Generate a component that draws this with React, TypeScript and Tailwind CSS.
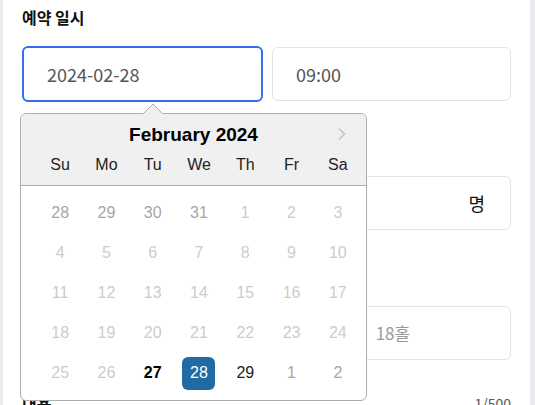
import { ChevronRight } from 'lucide-react';

const weekdays = ['Su', 'Mo', 'Tu', 'We', 'Th', 'Fr', 'Sa'];

type Day = { n: number; kind: 'outside' | 'disabled' | 'today' | 'selected' | 'normal' };

const weeks: Day[][] = [
  [
    { n: 28, kind: 'outside' },
    { n: 29, kind: 'outside' },
    { n: 30, kind: 'outside' },
    { n: 31, kind: 'outside' },
    { n: 1, kind: 'disabled' },
    { n: 2, kind: 'disabled' },
    { n: 3, kind: 'disabled' },
  ],
  [4, 5, 6, 7, 8, 9, 10].map((n) => ({ n, kind: 'disabled' as const })),
  [11, 12, 13, 14, 15, 16, 17].map((n) => ({ n, kind: 'disabled' as const })),
  [18, 19, 20, 21, 22, 23, 24].map((n) => ({ n, kind: 'disabled' as const })),
  [
    { n: 25, kind: 'disabled' },
    { n: 26, kind: 'disabled' },
    { n: 27, kind: 'today' },
    { n: 28, kind: 'selected' },
    { n: 29, kind: 'normal' },
    { n: 1, kind: 'outside' },
    { n: 2, kind: 'outside' },
  ],
];

const dayText = {
  outside: 'text-[#a6a6a6]',
  disabled: 'text-[#cccccc]',
  today: 'text-[#000] font-bold',
  selected: 'text-white bg-[#216ba5] rounded-[6px]',
  normal: 'text-[#222] font-medium',
};

function DatePopup() {
  return (
    <div className="absolute left-[17px] top-[113px] w-[347px] h-[288px] rounded-[6px] border border-[#aeaeae] bg-white font-['Liberation_Sans',sans-serif]">
      {/* arrow */}
      <svg className="absolute left-[121px] top-[-11px]" width="22" height="12" viewBox="0 0 22 12">
        <path d="M0 11.5 L11 1 L22 11.5 Z" fill="#f0f0f0" />
        <path d="M0.5 11.5 L11 1 L21.5 11.5" fill="none" stroke="#aeaeae" strokeWidth="1" />
      </svg>
      <div className="relative h-[72px] bg-[#f0f0f0] border-b border-[#aeaeae] rounded-t-[6px]">
        <div className="ml-[16px] w-[324px] pr-[11px] pt-[9px] text-center text-[19px] font-bold leading-[24px] text-[#000]">
          February 2024
        </div>
        <ChevronRight size={20} strokeWidth={2} className="absolute left-[311px] top-[10px] text-[#c6c6c6]" />
        <div className="ml-[16px] mt-[6px] grid w-[324px] grid-cols-7">
          {weekdays.map((w) => (
            <div key={w} className="text-center text-[16px] leading-[24px] text-[#222]">
              {w}
            </div>
          ))}
        </div>
      </div>
      <div className="ml-[16px] w-[324px] pt-[7px]">
        {weeks.map((week, i) => (
          <div key={i} className="grid h-[40px] grid-cols-7 items-center">
            {week.map((d, j) => (
              <div key={j} className="flex justify-center">
                <span
                  className={`flex h-[33px] w-[33px] items-center justify-center text-[16px] ${dayText[d.kind]}`}
                >
                  {d.n}
                </span>
              </div>
            ))}
          </div>
        ))}
      </div>
    </div>
  );
}

export default function App() {
  return (
    <div className="flex h-[405px] w-[535px] overflow-hidden bg-[#e9e9ef] pl-[3px] pr-[5px] font-['Noto_Sans_CJK_KR','Noto_Sans',sans-serif]">
      <div className="relative flex-1 bg-white px-[19px] pt-[5px]">
        <div className="h-[24px] text-[16px] font-bold leading-[24px] text-[#111]">예약 일시</div>
        <div className="mt-[17px] flex items-center gap-[9px]">
          <div className="flex h-[56px] w-[241px] items-center rounded-[6px] border-2 border-[#2f6ff0] pl-[23px] text-[18px] text-[#555]">
            2024-02-28
          </div>
          <div className="flex h-[54px] flex-1 items-center rounded-[6px] border border-[#e3e3e3] pl-[23px] text-[18px] text-[#555]">
            09:00
          </div>
        </div>

        <div className="mt-[33px] h-[24px] text-[16px] font-bold leading-[24px] text-[#111]">인원</div>
        <div className="mt-[17px] flex h-[54px] items-center justify-end rounded-[6px] border border-[#e3e3e3] pr-[25px] text-[18px] text-[#111]">
          명
        </div>

        <div className="mt-[35px] h-[24px] text-[16px] font-bold leading-[24px] text-[#111]">코스</div>
        <div className="mt-[17px] grid grid-cols-3 gap-[10px]">
          {['9홀', '18홀', '18홀'].map((t, i) => (
            <div
              key={i}
              className="flex h-[54px] items-center rounded-[6px] border border-[#e3e3e3] pl-[20px] text-[17px] text-[#9a9a9a]"
            >
              {t}
            </div>
          ))}
        </div>

        <div className="mt-[31px] flex items-center justify-between">
          <span className="text-[16px] font-bold leading-[24px] text-[#111]">내용</span>
          <span className="text-[14px] leading-[24px] text-[#555]">1/500</span>
        </div>

        <DatePopup />
      </div>
    </div>
  );
}
